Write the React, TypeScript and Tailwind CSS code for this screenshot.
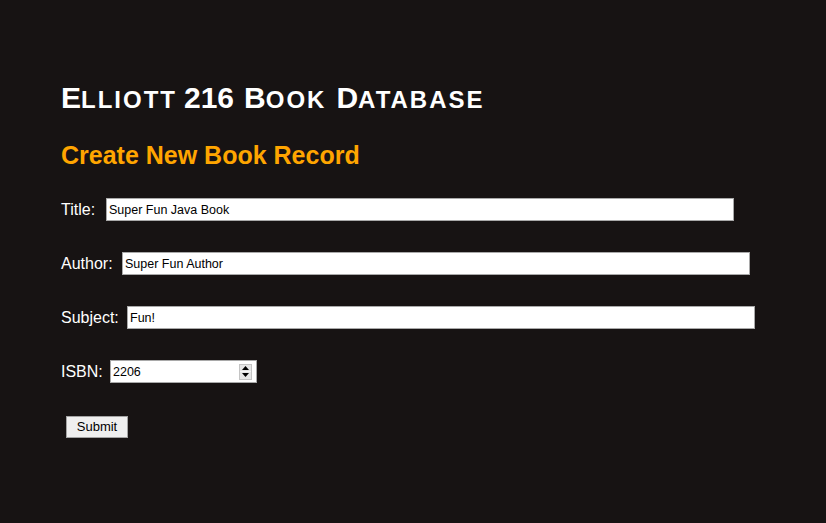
const fields = [
  { label: 'Title:', labelW: 'w-[45px]', inputW: 'w-[628px]', value: 'Super Fun Java Book' },
  { label: 'Author:', labelW: 'w-[61px]', inputW: 'w-[628px]', value: 'Super Fun Author' },
  { label: 'Subject:', labelW: 'w-[66px]', inputW: 'w-[628px]', value: 'Fun!' },
]

// small caps drawn by hand: capital at full size, rest as smaller caps
function SmallCapsWord({ first, rest, className }: { first: string; rest?: string; className?: string }) {
  return (
    <span className={className}>
      <span className="text-[30px]">{first}</span>
      {rest && <span className="text-[24px] tracking-[2px]">{rest}</span>}
    </span>
  )
}

export default function App() {
  return (
    <div className="min-h-screen w-full bg-[#171313] pl-[61px] pt-[79px] font-['Liberation_Sans',Arial,sans-serif]">
      <h1 className="flex h-[37px] items-baseline leading-[37px] font-bold text-white">
        <SmallCapsWord first="E" rest="LLIOTT" />
        <span className="ml-[7px] text-[30px]">216</span>
        <SmallCapsWord first="B" rest="OOK" className="ml-[10px]" />
        <SmallCapsWord first="D" rest="ATABASE" className="ml-[10px]" />
      </h1>
      <h2 className="mt-[25px] text-[25px] leading-[29px] font-bold text-[#ffa500]">
        Create New Book Record
      </h2>

      <form className="mt-[28px] flex flex-col gap-[31px]" onSubmit={(e) => e.preventDefault()}>
        {fields.map((f) => (
          <div key={f.label} className="flex h-[23px] items-center">
            <label className={`${f.labelW} text-[16px] leading-[18px] text-white`}>{f.label}</label>
            <input
              type="text"
              defaultValue={f.value}
              className={`${f.inputW} h-[23px] border border-[#a9a9a9] bg-white px-[2px] text-[12.5px] text-black outline-none`}
            />
          </div>
        ))}

        {/* ISBN with spinner */}
        <div className="flex h-[23px] items-center">
          <label className="w-[49px] text-[16px] leading-[18px] text-white">ISBN:</label>
          <div className="flex h-[23px] w-[147px] items-center border border-[#a9a9a9] bg-white pl-[2px] pr-[4px]">
            <input
              type="text"
              defaultValue="2206"
              className="h-full min-w-0 flex-1 bg-white text-[12.5px] text-black outline-none"
            />
            <div className="flex h-[16px] w-[13px] flex-col border border-[#c4c4c4] bg-[#e6e6e6]">
              <div className="flex flex-1 items-center justify-center border-b border-[#f5f5f5]">
                <svg width="7" height="4" viewBox="0 0 7 4">
                  <path d="M3.5 0 L7 4 L0 4 Z" fill="#000" />
                </svg>
              </div>
              <div className="flex flex-1 items-center justify-center">
                <svg width="7" height="4" viewBox="0 0 7 4">
                  <path d="M0 0 L7 0 L3.5 4 Z" fill="#000" />
                </svg>
              </div>
            </div>
          </div>
        </div>

        <div className="pl-[5px]">
          <button
            type="submit"
            className="h-[22px] w-[62px] border border-[#a3a3a3] bg-[#efefef] text-[13px] text-black"
          >
            Submit
          </button>
        </div>
      </form>
    </div>
  )
}
